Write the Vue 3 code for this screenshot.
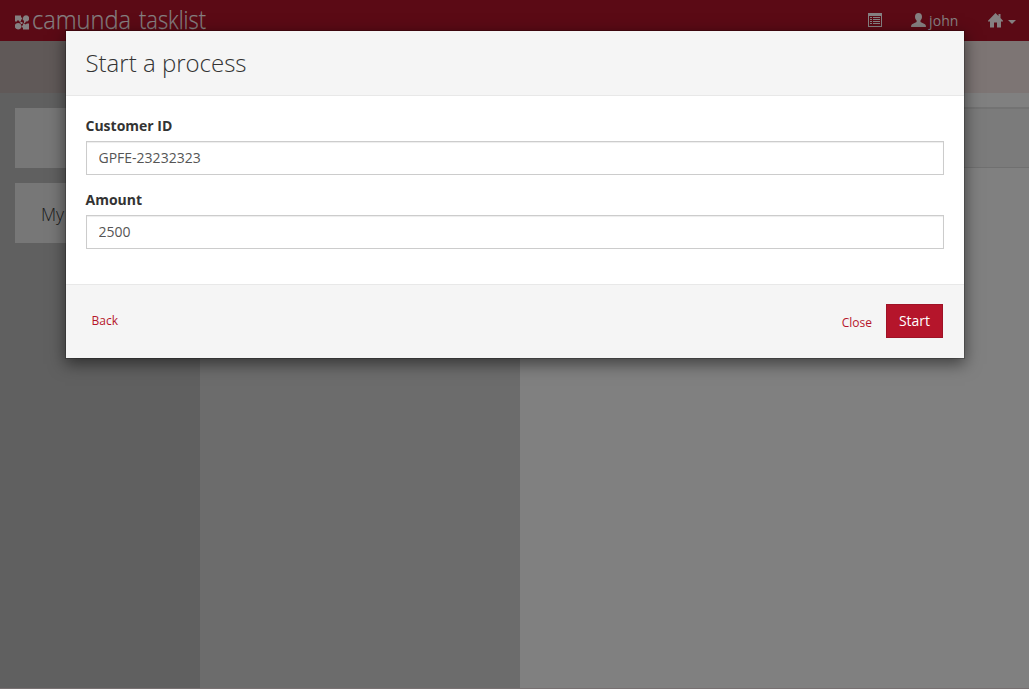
<script setup>
import { ref } from 'vue'
const customer = ref('GPFE-23232323')
const amount = ref('2500')
</script>

<template>
  <div class="page">
    <header class="navbar">
      <div class="brand">
        <svg class="mark" width="14" height="15" viewBox="0 0 14 15">
          <path d="M0 0.5H6V2.5H7.2V4.5H6V6.5H4V5.5H2V6.5H0ZM11 0.3A3 3 0 0 1 11 6.6L10 8H9V6L7.8 4.5L8.2 2Q9 .3 11 .3ZM3 8A3.2 3.2 0 1 1 3 14.4A3.2 3.2 0 1 1 3 8ZM5 7H7.5V9H6ZM8 8.5H9.5L10.5 9.5L12 8.5H14V14.5H8V12.5H6.6V10.5H8Z" />
        </svg>
        <svg class="wordmark" width="176" height="30" viewBox="0 0 176 30">
          <text x="0" y="24.6" textLength="99" lengthAdjust="spacingAndGlyphs">camunda</text>
          <text x="107" y="24.6" textLength="67" lengthAdjust="spacingAndGlyphs">tasklist</text>
        </svg>
      </div>
      <nav>
        <svg class="list" width="14" height="14" viewBox="0 0 14 14" shape-rendering="crispEdges">
          <path fill-rule="evenodd" d="M0 0H14V14H0ZM1 3V13H13V3Z" />
          <path d="M2 4H4V5H2ZM5 4H12V5H5ZM2 6H4V7H2ZM5 6H12V7H5ZM2 8H4V9H2ZM5 8H12V9H5ZM2 10H4V11H2ZM5 10H12V11H5Z" />
        </svg>
        <svg class="user" width="15" height="14" viewBox="0 0 15 14">
          <path d="M7.5 0C9.8 0 11 1.4 11 3.7C11 5.7 10.2 6.5 9.5 7.5V9L14 11.2Q15 12 15 14H0Q0 12 1 11.2L5.6 9V7.5C4.8 6.5 4 5.7 4 3.7C4 1.4 5.2 0 7.5 0Z" />
        </svg>
        <span class="name">john</span>
        <svg class="home" width="15" height="15" viewBox="0 0 15 15">
          <path d="M7.5 0L10.5 3V1H12.5V5L15 7.7V8.5H13V14.5H9V9.5H6V14.5H2V8.5H0V7.7Z" />
        </svg>
        <i class="caret"></i>
      </nav>
    </header>
    <div class="subbar"><div></div><div></div><div></div></div>
    <main class="columns">
      <aside class="filters">
        <div class="card"></div>
        <div class="card">My</div>
      </aside>
      <section class="tasks"></section>
      <section class="detail"><div class="panel"></div></section>
    </main>
    <div class="bottom"></div>

    <form class="modal" @submit.prevent>
      <h3>Start a process</h3>
      <div class="body">
        <label for="customer">Customer ID</label>
        <input id="customer" v-model="customer" type="text" />
        <label for="amount">Amount</label>
        <input id="amount" v-model="amount" type="text" />
      </div>
      <footer>
        <a class="back">Back</a>
        <a class="close">Close</a>
        <button>Start</button>
      </footer>
    </form>
  </div>
</template>

<style>
body { margin: 0; overflow: hidden; }
</style>

<style scoped>
* { box-sizing: border-box; }
.page { position: relative; width: 1029px; height: 689px; display: flex; flex-direction: column; font-family: "Open Sans", sans-serif; font-size: 14px; color: #333; overflow: hidden; }
.navbar { height: 41px; flex: none; background: #5b0a15; display: flex; justify-content: space-between; }
.brand { display: flex; padding-left: 15px; }
.mark { margin-top: 15px; fill: #858081; }
.wordmark { margin: 4px 0 0 3px; fill: #858081; stroke: #858081; stroke-width: .25px; font: 300 26.5px "Open Sans", sans-serif; overflow: visible; }
nav { display: flex; color: #858081; fill: #858081; padding-right: 13px; }
.list { margin: 13px 29px 0 0; }
.user { margin: 13px 3px 0 0; }
.name { line-height: 41px; width: 30px; font-size: 14px; letter-spacing: .1px; }
.home { margin: 13px 5px 0 29px; }
.caret { width: 0; height: 0; margin-top: 20px; border: 4px solid transparent; border-top-color: #858081; border-bottom: 0; }
.subbar { height: 52px; flex: none; display: grid; grid-template-columns: 200px 320px 1fr; }
.subbar div { background: #605958; }
.subbar div:nth-child(2) { background: #6b6362; }
.subbar div:nth-child(3) { background: #7d7574; }
.columns { flex: 1; display: grid; grid-template-columns: 200px 320px 1fr; }
.filters { background: #606060; padding: 15px 0 0 15px; }
.card { height: 60px; margin-bottom: 15px; padding-left: 26px; background: #777; font-size: 17.5px; font-weight: 300; line-height: 62px; color: #1a1a1a; }
.tasks { background: #6c6c6c; }
.detail { background: #808080; padding-top: 14px; }
.panel { height: 61px; background: #7b7b7b; border-top: 2px solid #737373; border-bottom: 1px solid #707070; }
.bottom { height: 1px; flex: none; background: #777071; }
.modal { position: absolute; left: 65px; top: 30px; width: 900px; height: 329px; border: 1px solid rgba(0, 0, 0, .2); background: #fff; background-clip: padding-box; box-shadow: 0 5px 15px rgba(0, 0, 0, .5); }
h3 { margin: 0; height: 65px; padding-left: 19.5px; background: #f5f5f5; border-bottom: 1px solid #e8e8e8; font-size: 24px; font-weight: 300; line-height: 64px; }
.body { height: 188px; padding: 20px; }
label { display: block; height: 20px; margin: 0 0 5px -.5px; line-height: 20px; font-weight: 700; }
input { display: block; width: 100%; height: 34px; margin: 0 0 15px; padding: 5px 12px 7px 11.5px; border: 1px solid #ccc; border-radius: 0; background: #fff; color: #555; font: 14px/20px "Open Sans", sans-serif; box-shadow: inset 0 1px 1px rgba(0, 0, 0, .075); outline: none; }
footer { height: 74px; padding: 19px 21px 20px 25.5px; display: flex; background: #f5f5f5; border-top: 1px solid #e8e8e8; font-size: 12px; line-height: 18px; color: #b5152b; }
.back { margin: 8px auto 0 0; }
.close { margin: 10px 14px 0 0; }
button { width: 57px; height: 34px; padding: 0; border: 1px solid #9f1226; background: #b5152b; color: #fff; font: 14px/20px "Open Sans", sans-serif; }
</style>
